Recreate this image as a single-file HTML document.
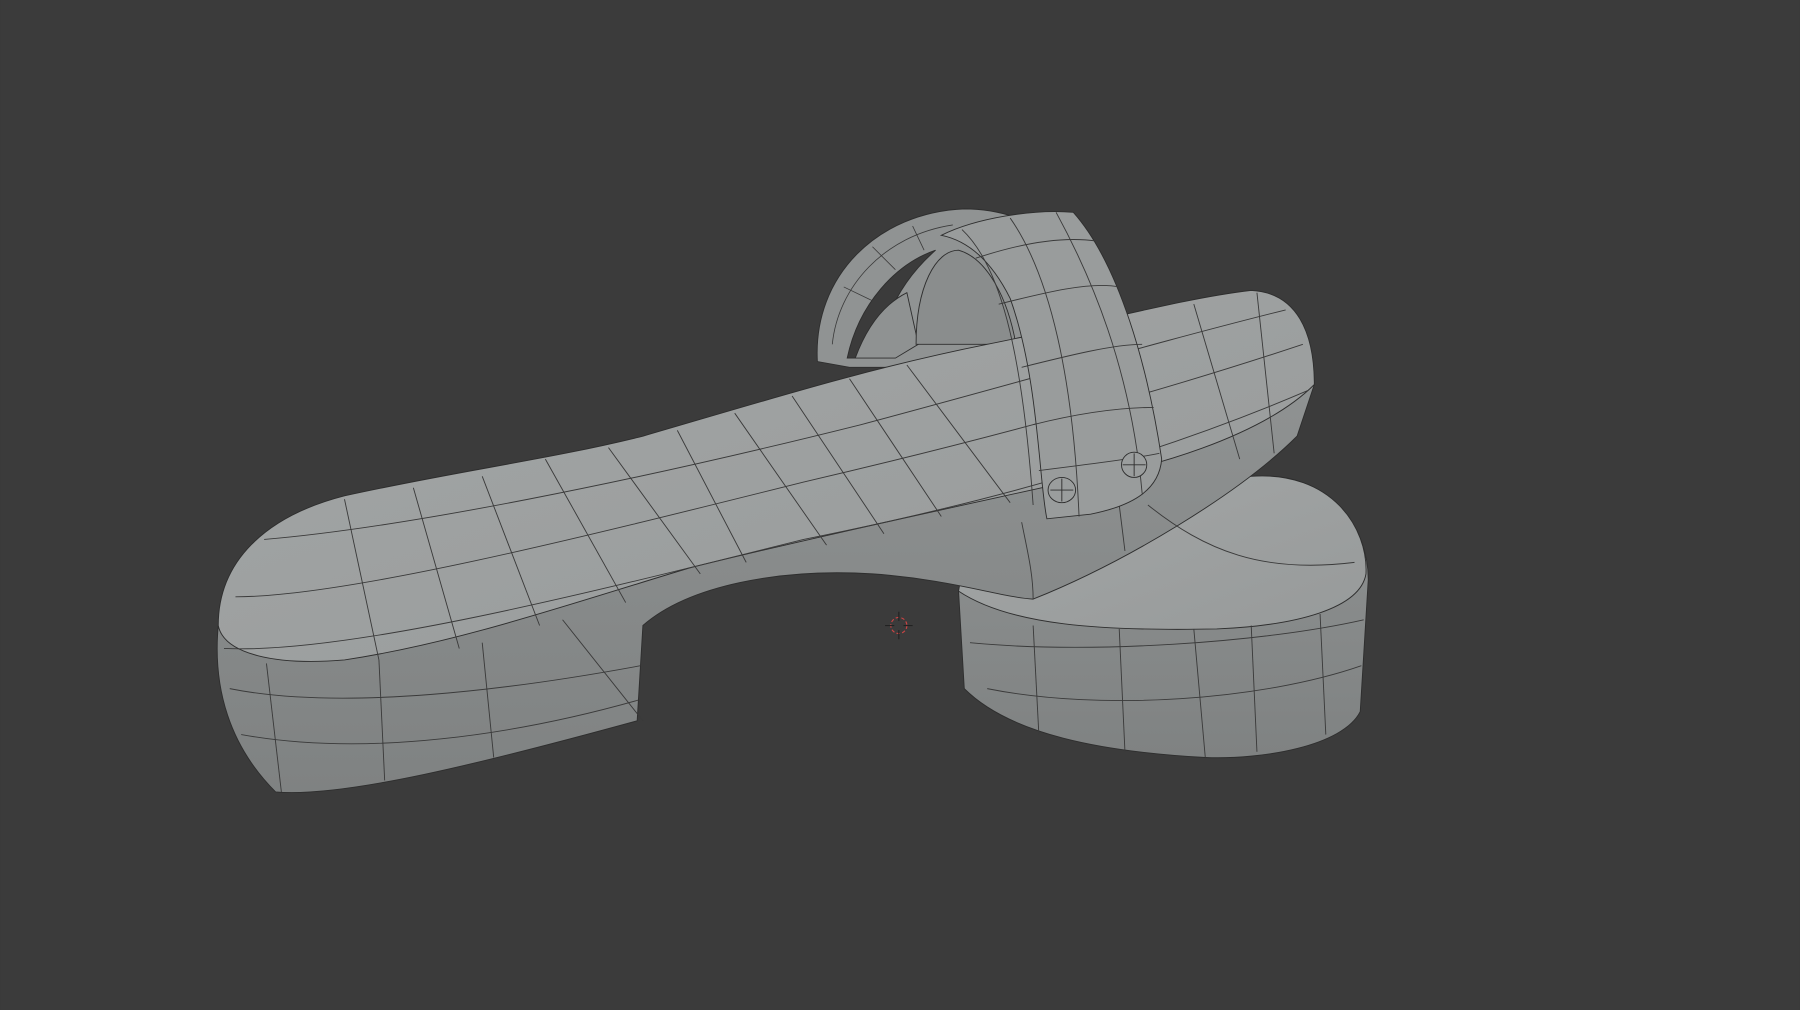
<!DOCTYPE html>
<html><head><meta charset="utf-8"><style>
html,body{margin:0;padding:0;background:#3b3b3b;width:1800px;height:1010px;overflow:hidden}
svg{display:block}
</style></head><body>
<svg width="1800" height="1010" viewBox="0 0 1568 880" xmlns="http://www.w3.org/2000/svg">
<defs>
<linearGradient id="top" x1="0" y1="0" x2="1" y2="1"><stop offset="0" stop-color="#a3a6a6"/><stop offset="1" stop-color="#979a9a"/></linearGradient>
<linearGradient id="side" x1="0" y1="0" x2="0" y2="1"><stop offset="0" stop-color="#8f9292"/><stop offset="1" stop-color="#7f8282"/></linearGradient>
</defs>
<rect width="1568" height="880" fill="#3b3b3b"/>
<g stroke="#2e2e2e" stroke-width="0.8">
<!-- rear heel block -->
<path d="M835,515 C840,470 950,430 1090,415 C1160,410 1192,460 1192,505 L1185,620 C1170,650 1100,662 1050,660 C960,655 880,640 840,600 Z" fill="url(#side)"/>
<path d="M835,515 C840,470 950,430 1090,415 C1160,410 1192,460 1190,500 C1185,530 1130,545 1060,548 C960,550 880,545 835,515 Z" fill="url(#top)"/>
<!-- back strap arch -->
<path d="M712,315 C708,240 765,185 840,182 C900,182 960,220 990,300 L880,320 L740,320 Z" fill="#909393"/>
<path d="M738,312 C748,265 780,230 815,218 C790,240 770,270 765,312 Z" fill="#3b3b3b"/>
<path d="M745,312 C755,285 770,265 790,255 L800,300 L780,312 Z" fill="#8f9292"/>
<path d="M798,300 C798,250 815,218 835,218 C860,225 878,260 885,300 Z" fill="#8a8d8d"/>
<g fill="none" stroke="#3a3a3a" stroke-width="0.7">
<path d="M725,300 C730,250 770,205 830,196"/>
<path d="M735,250 L760,262 M760,215 L780,235 M795,197 L805,218"/>
</g>
<!-- main sole side -->
<path d="M190,545 C185,600 200,650 240,690 C300,695 420,665 555,628 L560,545 C600,510 680,495 760,500 C830,505 870,520 900,522 C980,490 1080,430 1130,380 L1145,335 C1140,340 1050,380 960,400 C800,430 600,500 190,545 Z" fill="url(#side)"/>
<!-- main sole top -->
<path d="M190,545 C190,490 230,450 300,432 C400,410 480,400 560,380 C680,345 760,320 860,300 C960,280 1030,260 1090,253 C1130,255 1145,290 1145,335 C1100,380 1000,410 930,420 C840,440 700,470 600,495 C500,525 400,560 300,575 C240,580 195,570 190,545 Z" fill="url(#top)"/>
<g fill="none" stroke="#3a3a3a" stroke-width="0.8">
<path d="M205,520 C300,520 500,470 700,420 C850,385 1000,345 1135,300"/>
<path d="M230,470 C350,460 550,420 750,370 C900,330 1000,300 1120,270"/>
<path d="M195,565 C300,570 500,520 700,470 C850,440 1000,400 1140,340"/>
<path d="M300,435 L330,575"/><path d="M360,425 L400,565"/><path d="M420,415 L470,545"/><path d="M475,400 L545,525"/>
<path d="M530,390 L610,500"/><path d="M590,375 L650,490"/><path d="M640,360 L720,475"/><path d="M690,345 L770,465"/>
<path d="M740,330 L820,450"/><path d="M790,318 L880,438"/><path d="M1040,265 L1080,400"/><path d="M1095,255 L1110,395"/>
<path d="M232,578 L245,690"/><path d="M330,575 L335,680"/><path d="M420,560 L430,660"/><path d="M490,540 L560,628"/>
<path d="M200,600 C300,620 450,600 558,580"/><path d="M210,640 C320,660 450,640 556,610"/>
<path d="M900,522 C900,500 895,480 890,455"/><path d="M980,480 L975,440"/>
<path d="M845,560 C950,570 1100,560 1188,540"/><path d="M860,600 C960,620 1100,610 1186,580"/>
<path d="M900,545 L905,640"/><path d="M975,548 L980,655"/><path d="M1040,548 L1050,660"/><path d="M1090,545 L1095,655"/><path d="M1150,535 L1155,640"/>
<path d="M1000,440 C1050,480 1100,500 1180,490"/>
</g>
<!-- front strap -->
<path d="M820,205 C850,190 900,182 935,185 C975,230 1000,320 1012,400 C1010,425 990,440 950,448 L912,452 C905,420 905,330 880,260 C865,230 845,210 820,205 Z" fill="#999c9c"/>
<g fill="none" stroke="#3a3a3a" stroke-width="0.8">
<path d="M838,200 C870,230 890,300 900,440"/><path d="M920,185 C950,240 985,320 995,430"/><path d="M880,190 C915,240 935,330 940,450"/>
<path d="M850,225 C880,215 920,205 955,210"/><path d="M870,265 C910,255 950,245 975,250"/><path d="M890,320 C930,310 970,300 995,300"/>
<path d="M900,370 C940,360 975,355 1005,355"/><path d="M905,410 C945,405 985,400 1010,395"/>
</g>
<ellipse cx="925" cy="427" rx="12" ry="11" fill="#9a9d9d"/>
<ellipse cx="988" cy="405" rx="11" ry="11" fill="#9a9d9d"/>
<path d="M915,427 H935 M925,417 V437 M978,405 H998 M988,395 V415" fill="none"/>
</g>
<g stroke-width="1" fill="none">
<circle cx="783" cy="545" r="7" stroke="#c44" stroke-dasharray="3 2"/>
<path d="M771,545 H779 M787,545 H795 M783,533 V541 M783,549 V557" stroke="#222"/>
</g>
</svg>
</body></html>
